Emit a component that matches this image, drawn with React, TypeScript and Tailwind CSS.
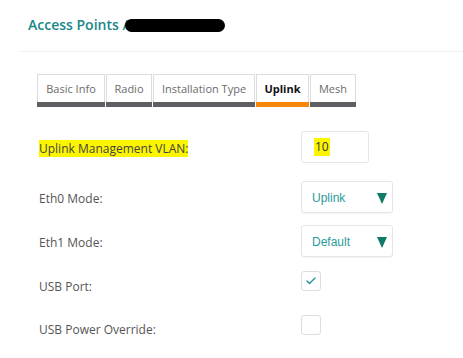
import { Check } from 'lucide-react'

const TABS = [
  { name: 'Basic Info', w: 'w-[68px]' },
  { name: 'Radio', w: 'w-[46px]' },
  { name: 'Installation Type', w: 'w-[102px]' },
  { name: 'Uplink', w: 'w-[53px]', active: true },
  { name: 'Mesh', w: 'w-[46px]' },
]

function Triangle() {
  return (
    <svg width="10" height="11" viewBox="0 0 10 11" className="absolute right-[5px] top-[11px]">
      <path d="M0 0 H10 L5 11 Z" fill="#0f7a68" />
    </svg>
  )
}

function Select({ value }: { value: string }) {
  return (
    <div className="relative w-[92px] h-[32px] rounded-[3px] border border-[#e6e6e6] bg-white shadow-[0_1px_1px_rgba(0,0,0,0.04)]">
      <span className="absolute left-[10px] top-[8px] text-[12px] leading-[16px] text-[#2b9a9a] font-['Liberation_Sans',Arial,sans-serif]">
        {value}
      </span>
      <Triangle />
    </div>
  )
}

function Checkbox({ checked }: { checked?: boolean }) {
  return (
    <div className="w-[20px] h-[20px] rounded-[3px] border border-[#dedede] bg-white flex items-center justify-center">
      {checked && <Check size={12} strokeWidth={2.5} className="text-[#1e8f95]" />}
    </div>
  )
}

export default function App() {
  return (
    <div className="w-[463px] h-[358px] bg-white overflow-hidden font-['Open_Sans',sans-serif]">
      <div className="h-[52px] ml-[19px] border-b border-[#eef0f4] flex items-start pt-[15px] pl-[9px]">
        <h1 className="text-[14px] leading-[20px] font-semibold text-[#19878a] flex items-center">
          Access Points /
          <span className="ml-[-3px] inline-block w-[100px] h-[13px] rounded-full bg-black" />
        </h1>
      </div>

      <div className="pl-[37px] pt-[22px]">
        <div className="flex gap-[1px]">
          {TABS.map((t) => (
            <div key={t.name} className={`${t.w} flex flex-col`}>
              <div
                className={`h-[28px] border border-b-0 border-[#dcdcdc] flex items-center justify-center pt-[2px] text-[11px] ${
                  t.active ? 'font-bold text-[#111]' : 'text-[#6b6b6b]'
                }`}
              >
                {t.name}
              </div>
              <div className={`h-[5px] ${t.active ? 'bg-[#f7860b]' : 'bg-[#5d5f63]'}`} />
            </div>
          ))}
        </div>

        <div className="text-[12px] text-[#555] pl-[2px]">
          <div className="mt-[24px] h-[32px] flex items-center">
            <div className="w-[262px] mt-[3px]">
              <span className="bg-[#fcf500] text-[#444]">Uplink Management VLAN:</span>
            </div>
            <div className="w-[68px] h-[32px] rounded-[3px] border border-[#e6e6e6] flex items-center pl-[12px]">
              <span className="bg-[#fcf500] text-[#333] px-[1px]">10</span>
            </div>
          </div>

          <div className="mt-[18px] h-[32px] flex items-center">
            <div className="w-[262px] mt-[3px]">Eth0 Mode:</div>
            <Select value="Uplink" />
          </div>

          <div className="mt-[12px] h-[32px] flex items-center">
            <div className="w-[262px] mt-[3px]">Eth1 Mode:</div>
            <Select value="Default" />
          </div>

          <div className="mt-[14px] h-[24px] flex items-start">
            <div className="w-[262px] mt-[8px] leading-[16px]">USB Port:</div>
            <Checkbox checked />
          </div>

          <div className="mt-[20px] h-[24px] flex items-start">
            <div className="w-[262px] mt-[7px] leading-[16px]">USB Power Override:</div>
            <Checkbox />
          </div>
        </div>
      </div>
    </div>
  )
}
